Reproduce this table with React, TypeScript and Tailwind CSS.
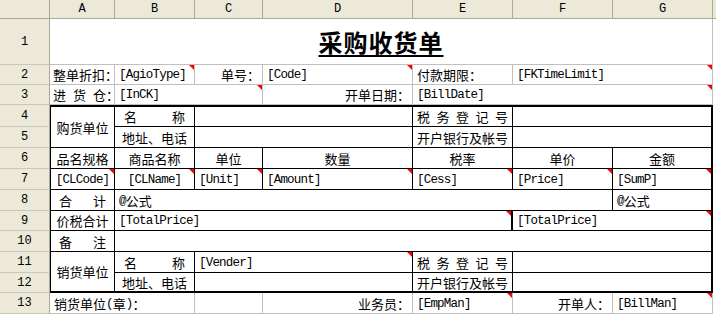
import type { ReactNode } from "react";

const CJK = "font-['Noto_Sans_CJK_SC',sans-serif]";
const MONO = "font-['Liberation_Mono','Noto_Sans_CJK_SC',monospace]";

type CellProps = {
  pos: string;
  black?: boolean;
  extra?: string;
  tri?: boolean;
  children?: ReactNode;
};

function Cell({ pos, black = false, extra = "", tri = false, children }: CellProps) {
  const line = black ? "border-r border-b border-black" : "border-r border-b border-[#c0c0c0]";
  return (
    <div
      className={`relative flex min-w-0 items-center whitespace-nowrap bg-white text-[13px] leading-none text-black ${CJK} ${line} ${pos} ${extra}`}
    >
      {children}
      {tri && (
        <span className="absolute right-0 top-0 h-0 w-0 border-l-[5px] border-t-[5px] border-l-transparent border-t-[#ff0000]" />
      )}
    </div>
  );
}

function Field({ children }: { children: ReactNode }) {
  return (
    <span className={`${MONO} translate-y-[1px] text-[12.5px] leading-none tracking-[-0.8px]`}>{children}</span>
  );
}

function Spread({ chars }: { chars: string[] }) {
  return (
    <>
      {chars.map((c, i) => (
        <span key={i}>{c}</span>
      ))}
    </>
  );
}

const COLS = ["A", "B", "C", "D", "E", "F", "G"];
const COL_START = ["col-start-2", "col-start-3", "col-start-4", "col-start-5", "col-start-6", "col-start-7", "col-start-8"];
const ROW_START = [
  "row-start-2",
  "row-start-3",
  "row-start-4",
  "row-start-5",
  "row-start-6",
  "row-start-7",
  "row-start-8",
  "row-start-9",
  "row-start-10",
  "row-start-11",
  "row-start-12",
  "row-start-13",
  "row-start-14",
];

const HEAD = `flex items-center justify-center bg-[#ece9d8] text-[12px] leading-none text-black ${MONO}`;

export default function App() {
  return (
    <div className="h-[314px] w-[716px] overflow-hidden bg-white">
      <div className="grid grid-cols-[50px_65px_80px_68px_150px_100px_100px_100px_3px] grid-rows-[19px_46px_20px_20px_22px_21px_21px_21px_21px_20px_21px_21px_20px_21px]">
        {/* sheet headers */}
        <div className={`col-start-1 row-start-1 border-b border-r border-[#aca899] ${HEAD}`} />
        {COLS.map((c, i) => (
          <div key={c} className={`${COL_START[i]} row-start-1 border-b border-r border-[#aca899] ${HEAD}`}>
            {c}
          </div>
        ))}
        <div className={`col-start-9 row-start-1 border-b border-[#aca899] ${HEAD}`} />
        {ROW_START.map((r, i) => (
          <div
            key={r}
            className={`col-start-1 ${r} border-b border-r border-b-[#cbc7b7] border-r-[#aca899] ${HEAD}`}
          >
            {i + 1}
          </div>
        ))}

        {/* 1 */}
        <Cell pos="col-start-2 col-span-7 row-start-2" extra="justify-center">
          <span className="text-[24px] font-bold tracking-[1px] underline decoration-[2px] underline-offset-[3px]">
            采购收货单
          </span>
        </Cell>

        {/* 2 */}
        <Cell pos="col-start-2 row-start-3" extra="pl-[3px] text-[11.6px]">整单折扣：</Cell>
        <Cell pos="col-start-3 row-start-3" extra="pl-1" tri>
          <Field>[AgioType]</Field>
        </Cell>
        <Cell pos="col-start-4 row-start-3" extra="justify-end pr-0.5 text-[12px]">单号：</Cell>
        <Cell pos="col-start-5 row-start-3" extra="pl-1" tri>
          <Field>[Code]</Field>
        </Cell>
        <Cell pos="col-start-6 row-start-3" extra="pl-1 text-[12px]">付款期限：</Cell>
        <Cell pos="col-start-7 col-span-2 row-start-3" extra="pl-1" tri>
          <Field>[FKTimeLimit]</Field>
        </Cell>

        {/* 3 */}
        <Cell pos="col-start-2 row-start-4" extra="pl-[3px] text-[11.6px]">
          <span className="mr-[7px]">进</span>
          <span className="mr-[7px]">货</span>仓：
        </Cell>
        <Cell pos="col-start-3 col-span-2 row-start-4" extra="pl-1" tri>
          <Field>[InCK]</Field>
        </Cell>
        <Cell pos="col-start-5 row-start-4" extra="justify-end pr-0.5 text-[12.5px]">开单日期：</Cell>
        <Cell pos="col-start-6 col-span-3 row-start-4" extra="pl-1" tri>
          <Field>[BillDate]</Field>
        </Cell>

        {/* 4-5 buyer */}
        <Cell pos="col-start-2 row-start-5 row-span-2" black extra="justify-center border-l border-t-2">购货单位</Cell>
        <Cell pos="col-start-3 row-start-5" black extra="justify-between border-t-2 px-[9px]">
          <Spread chars={["名", "称"]} />
        </Cell>
        <Cell pos="col-start-4 col-span-2 row-start-5" black extra="border-t-2" />
        <Cell pos="col-start-6 row-start-5" black extra="justify-between border-t-2 px-1">
          <Spread chars={["税", "务", "登", "记", "号"]} />
        </Cell>
        <Cell pos="col-start-7 col-span-2 row-start-5" black extra="border-r-2 border-t-2" />

        <Cell pos="col-start-3 row-start-6" black extra="justify-center">地址、电话</Cell>
        <Cell pos="col-start-4 col-span-2 row-start-6" black />
        <Cell pos="col-start-6 row-start-6" black extra="justify-center">开户银行及帐号</Cell>
        <Cell pos="col-start-7 col-span-2 row-start-6" black extra="border-r-2" />

        {/* 6 */}
        <Cell pos="col-start-2 row-start-7" black extra="justify-center border-l">品名规格</Cell>
        <Cell pos="col-start-3 row-start-7" black extra="justify-center">商品名称</Cell>
        <Cell pos="col-start-4 row-start-7" black extra="justify-center">单位</Cell>
        <Cell pos="col-start-5 row-start-7" black extra="justify-center">数量</Cell>
        <Cell pos="col-start-6 row-start-7" black extra="justify-center">税率</Cell>
        <Cell pos="col-start-7 row-start-7" black extra="justify-center">单价</Cell>
        <Cell pos="col-start-8 row-start-7" black extra="justify-center border-r-2">金额</Cell>

        {/* 7 */}
        <Cell pos="col-start-2 row-start-8" black extra="justify-center border-l" tri>
          <Field>[CLCode]</Field>
        </Cell>
        <Cell pos="col-start-3 row-start-8" black extra="justify-center" tri>
          <Field>[CLName]</Field>
        </Cell>
        <Cell pos="col-start-4 row-start-8" black extra="pl-1" tri>
          <Field>[Unit]</Field>
        </Cell>
        <Cell pos="col-start-5 row-start-8" black extra="pl-1" tri>
          <Field>[Amount]</Field>
        </Cell>
        <Cell pos="col-start-6 row-start-8" black extra="pl-1" tri>
          <Field>[Cess]</Field>
        </Cell>
        <Cell pos="col-start-7 row-start-8" black extra="pl-1" tri>
          <Field>[Price]</Field>
        </Cell>
        <Cell pos="col-start-8 row-start-8" black extra="border-r-2 pl-1" tri>
          <Field>[SumP]</Field>
        </Cell>

        {/* 8 */}
        <Cell pos="col-start-2 row-start-9" black extra="justify-between border-l px-2">
          <Spread chars={["合", "计"]} />
        </Cell>
        <Cell pos="col-start-3 col-span-5 row-start-9" black extra="pl-1">
          <Field>@</Field>公式
        </Cell>
        <Cell pos="col-start-8 row-start-9" black extra="border-r-2 pl-1">
          <Field>@</Field>公式
        </Cell>

        {/* 9 */}
        <Cell pos="col-start-2 row-start-10" black extra="justify-center border-l">价税合计</Cell>
        <Cell pos="col-start-3 col-span-4 row-start-10" black extra="border-r-2 pl-1" tri>
          <Field>[TotalPrice]</Field>
        </Cell>
        <Cell pos="col-start-7 col-span-2 row-start-10" black extra="border-r-2 pl-1" tri>
          <Field>[TotalPrice]</Field>
        </Cell>

        {/* 10 */}
        <Cell pos="col-start-2 row-start-11" black extra="justify-between border-l px-2">
          <Spread chars={["备", "注"]} />
        </Cell>
        <Cell pos="col-start-3 col-span-6 row-start-11" black extra="border-r-2" />

        {/* 11-12 vendor */}
        <Cell pos="col-start-2 row-start-12 row-span-2" black extra="justify-center border-b-2 border-l">销货单位</Cell>
        <Cell pos="col-start-3 row-start-12" black extra="justify-between px-[9px]">
          <Spread chars={["名", "称"]} />
        </Cell>
        <Cell pos="col-start-4 col-span-2 row-start-12" black extra="pl-1" tri>
          <Field>[Vender]</Field>
        </Cell>
        <Cell pos="col-start-6 row-start-12" black extra="justify-between px-1">
          <Spread chars={["税", "务", "登", "记", "号"]} />
        </Cell>
        <Cell pos="col-start-7 col-span-2 row-start-12" black extra="border-r-2" />

        <Cell pos="col-start-3 row-start-13" black extra="justify-center border-b-2">地址、电话</Cell>
        <Cell pos="col-start-4 col-span-2 row-start-13" black extra="border-b-2" />
        <Cell pos="col-start-6 row-start-13" black extra="justify-center border-b-2">开户银行及帐号</Cell>
        <Cell pos="col-start-7 col-span-2 row-start-13" black extra="border-b-2 border-r-2" />

        {/* 13 */}
        <Cell pos="col-start-2 col-span-2 row-start-14" extra="pl-1">
          销货单位<Field>(</Field>章<Field>)</Field>：
        </Cell>
        <Cell pos="col-start-4 row-start-14" />
        <Cell pos="col-start-5 row-start-14" extra="justify-end pr-0.5">业务员：</Cell>
        <Cell pos="col-start-6 row-start-14" extra="pl-1" tri>
          <Field>[EmpMan]</Field>
        </Cell>
        <Cell pos="col-start-7 row-start-14" extra="justify-end pr-0.5">开单人：</Cell>
        <Cell pos="col-start-8 row-start-14" extra="pl-1" tri>
          <Field>[BillMan]</Field>
        </Cell>
      </div>
    </div>
  );
}
